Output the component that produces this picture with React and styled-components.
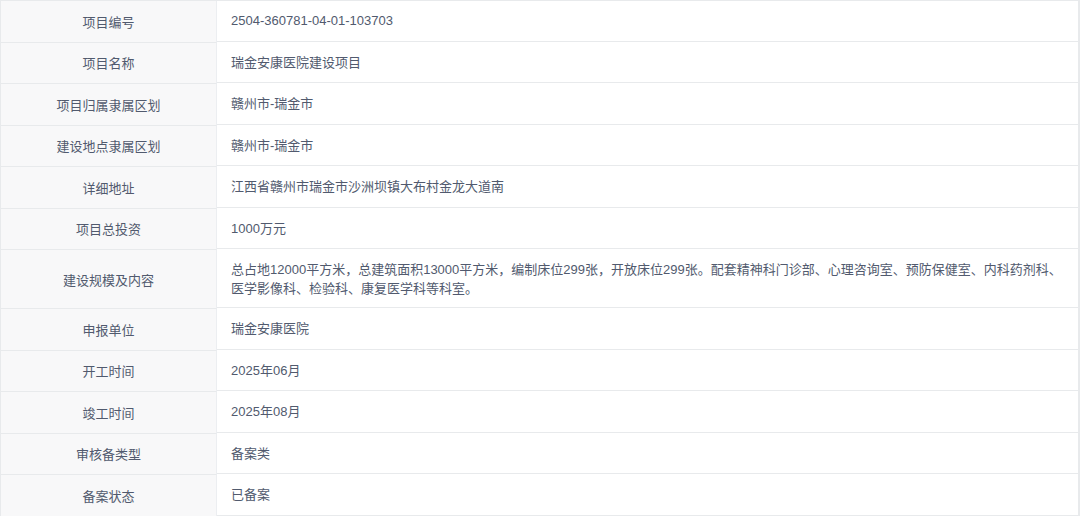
import React from 'react';
import styled, { createGlobalStyle } from 'styled-components';

const GlobalStyle = createGlobalStyle`
  html, body {
    margin: 0;
    padding: 0;
    background: #fff;
  }
  body {
    font-family: "Liberation Sans", "Noto Sans CJK SC", sans-serif;
  }
`;

const Table = styled.div`
  width: 1080px;
  display: grid;
  grid-template-columns: 216px 1fr;
  border-top: 1px solid #e8eaec;
  border-left: 1px solid #e8eaec;
  border-right: 2px solid #e8eaec;
  box-sizing: border-box;
  color: #515a6e;
  font-size: 13px;
`;

const Label = styled.div`
  height: ${p => p.tall ? '58px' : '40.5px'};
  display: flex;
  align-items: center;
  justify-content: center;
  background: #f8f8f9;
  border-bottom: 1px solid #e8eaec;
  border-right: 1px solid #eceef1;
`;

const Value = styled.div`
  height: ${p => p.tall ? '58px' : '40.5px'};
  display: flex;
  align-items: center;
  padding: 0 14px;
  line-height: 19px;
  border-bottom: 1px solid #e8eaec;
  box-sizing: border-box;
`;

const rows = [
  ['项目编号', '2504-360781-04-01-103703'],
  ['项目名称', '瑞金安康医院建设项目'],
  ['项目归属隶属区划', '赣州市-瑞金市'],
  ['建设地点隶属区划', '赣州市-瑞金市'],
  ['详细地址', '江西省赣州市瑞金市沙洲坝镇大布村金龙大道南'],
  ['项目总投资', '1000万元'],
  ['建设规模及内容', '总占地12000平方米，总建筑面积13000平方米，编制床位299张，开放床位299张。配套精神科门诊部、心理咨询室、预防保健室、内科药剂科、医学影像科、检验科、康复医学科等科室。', true],
  ['申报单位', '瑞金安康医院'],
  ['开工时间', '2025年06月'],
  ['竣工时间', '2025年08月'],
  ['审核备类型', '备案类'],
  ['备案状态', '已备案'],
];

export default function App() {
  return (
    <>
      <GlobalStyle />
      <Table>
        {rows.map(([label, value, tall]) => (
          <React.Fragment key={label}>
            <Label tall={tall}>{label}</Label>
            <Value tall={tall}>{value}</Value>
          </React.Fragment>
        ))}
      </Table>
    </>
  );
}
